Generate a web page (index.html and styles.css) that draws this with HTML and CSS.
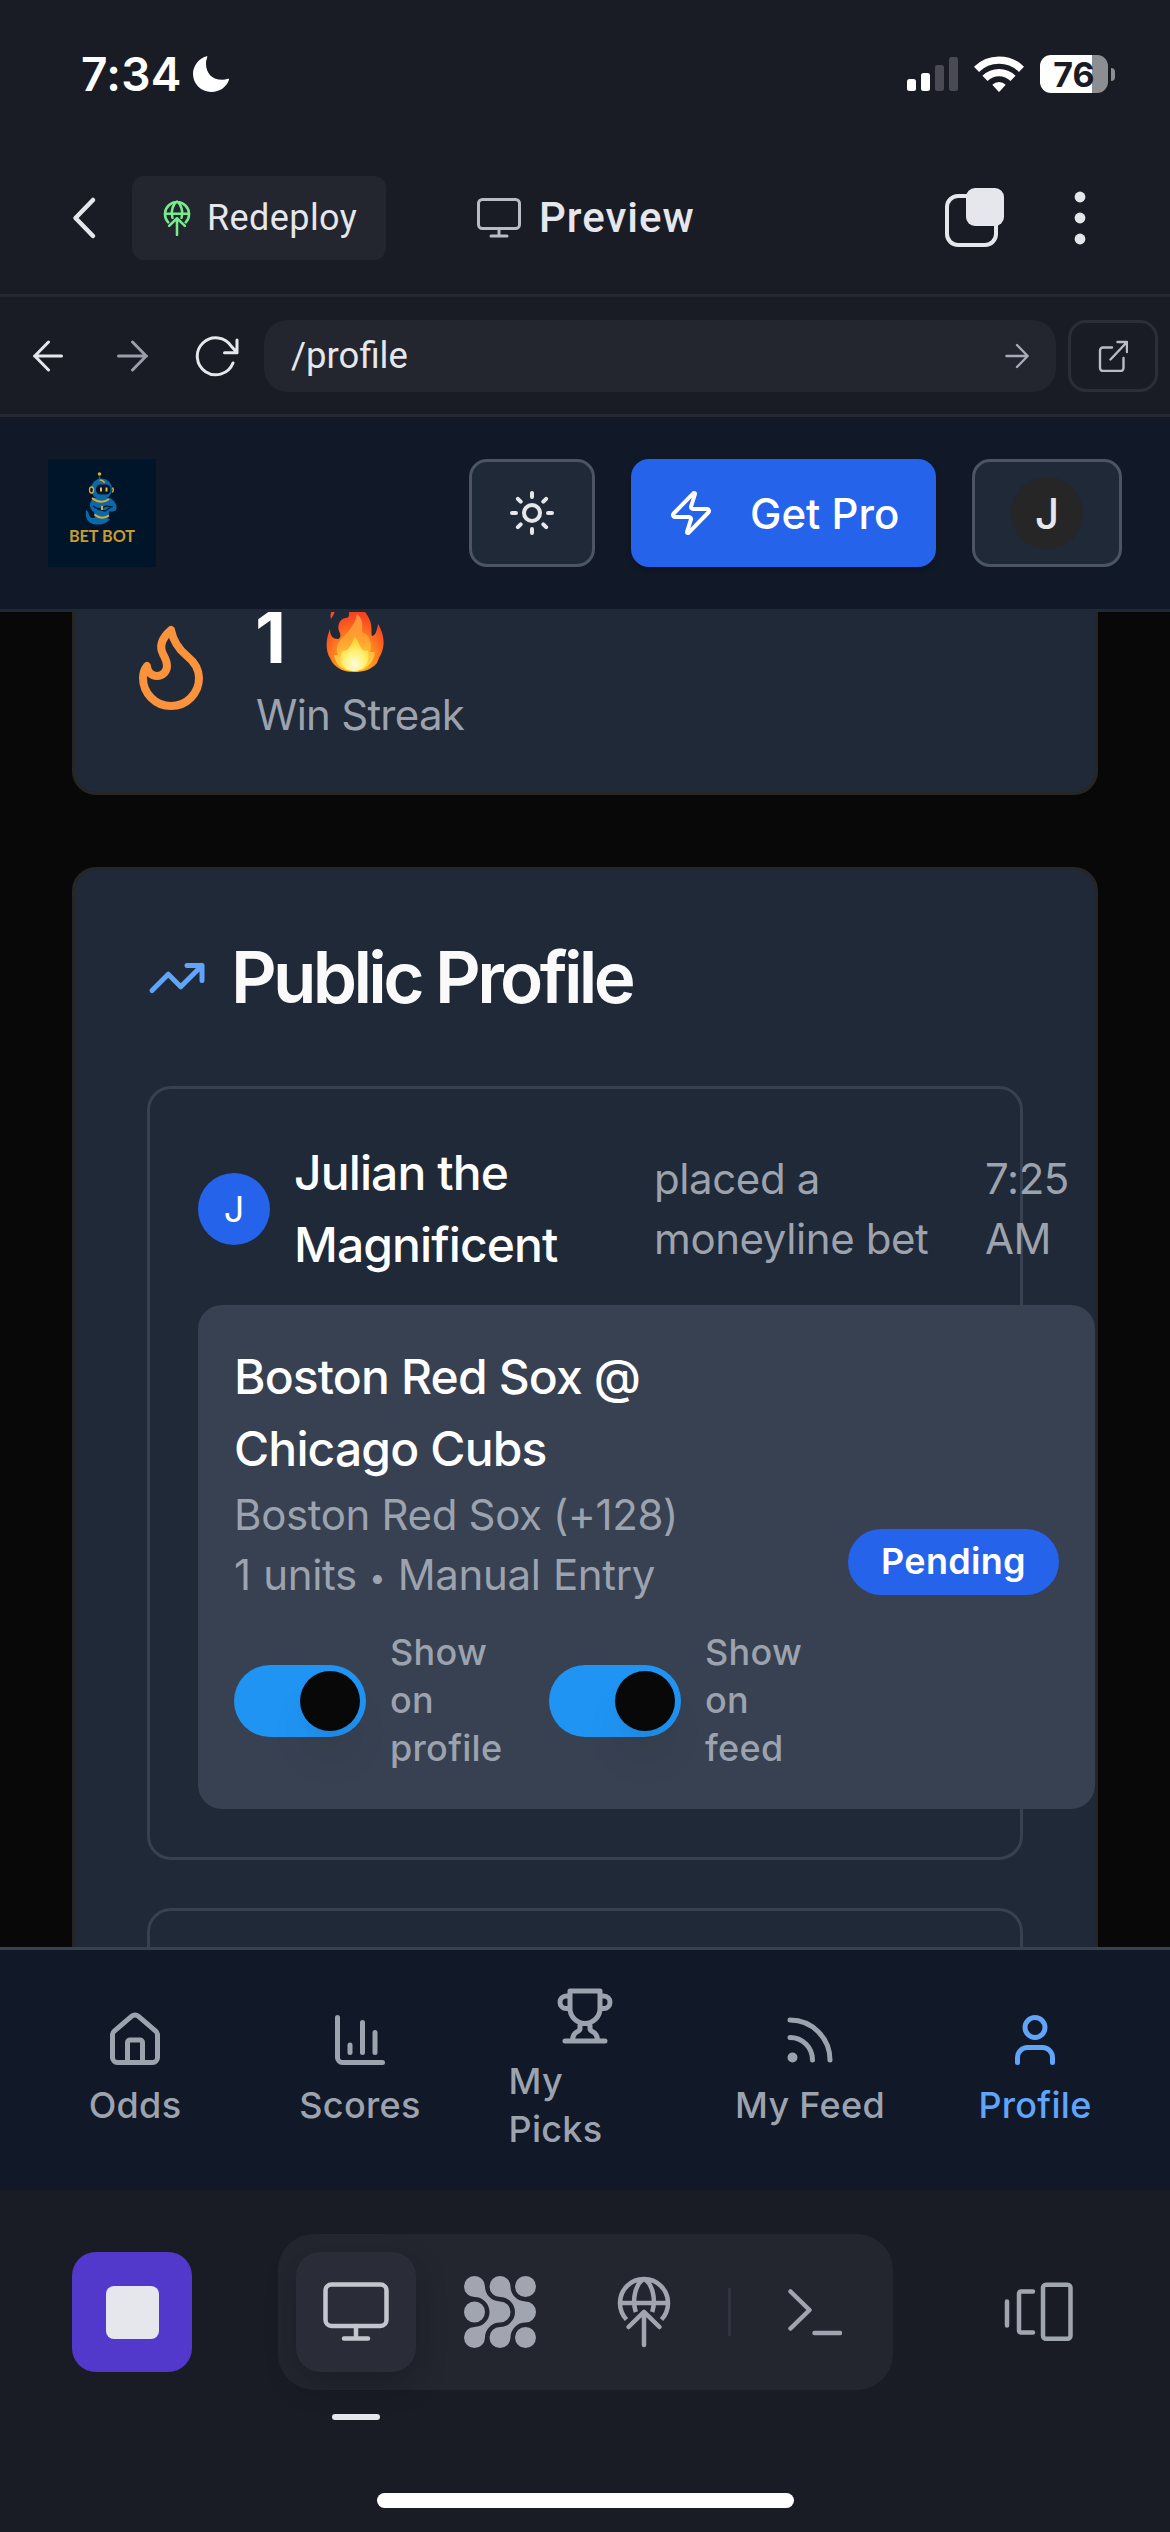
FILE: index.html
```html
<!DOCTYPE html>
<html lang="en">
<head>
<meta charset="utf-8">
<title>Bet Bot – Profile preview</title>
<link rel="stylesheet" href="styles.css">
</head>
<body>
<div class="screen">

  <header class="status">
    <div class="status-left">
      <span class="clock">7:34</span>
      <svg class="moon" width="36" height="36" viewBox="0 0 36 36"><path d="M13.5.2C6 2.200 0 9.500 0 17.800 0 28 8.200 36 18.300 36c8.300 0 15.200-4.800 17.700-12.200.3-.9-.2-1.400-1.100-1-1.800.7-3.700 1-5.800 1C19.300 23.800 13 17.300 13 7.700c0-2.400.4-4.400 1.200-6.300C14.600.5 14.400 0 13.500.2z" fill="#fff"/></svg>
    </div>
    <div class="status-right">
      <svg width="51" height="36" viewBox="0 0 51 36"><g fill="#fff"><rect y="23" width="9" height="12" rx="2.500"/><rect x="14" y="17" width="9" height="18" rx="2.500"/></g><g fill="#494a53"><rect x="28" y="9" width="9" height="26" rx="2.500"/><rect x="42" y="1" width="9" height="34" rx="2.500"/></g></svg>
      <svg class="wifi" width="50" height="36" viewBox="0 0 50 36"><g fill="none" stroke="#fff"><path d="M2.500 13.300a32 32 0 0 1 45 0" stroke-width="7.300"/><path d="M11 22.300a20 20 0 0 1 28 0" stroke-width="7.300"/></g><path d="M18.300 28.800a9.500 9.500 0 0 1 13.400 0L25.600 35.500q-.6.600-1.200 0z" fill="#fff"/></svg>
      <div class="battery"><span>76</span></div>
      <i class="battery-nub"></i>
    </div>
  </header>

  <div class="topbar">
    <svg class="back" width="30" height="48" viewBox="0 0 30 48"><path d="M24 6 6.500 24 24 42" fill="none" stroke="#e6e7ec" stroke-width="4.500" stroke-linecap="round" stroke-linejoin="round"/></svg>
    <div class="redeploy">
      <svg width="28" height="36" viewBox="617 2276 54 71" fill="none" stroke="#78ec8c" stroke-width="5" stroke-linecap="round"><path d="M626.700 2320a23.700 23.700 0 1 1 34.600 0M620 2303h48M635 2311c-3-12 0-26 9-32 9 6 12 20 9 32M644 2345v-32M628.500 2327l15.500-15 15.500 15" stroke-linejoin="round"/></svg>
      <span>Redeploy</span>
    </div>
    <div class="preview">
      <svg width="44" height="42" viewBox="0 0 44 42" fill="none" stroke="#b9bcc5" stroke-width="3" stroke-linecap="round"><rect x="1.500" y="2.500" width="41" height="29" rx="4"/><path d="M22 32v7M14 39h16"/></svg>
      <span>Preview</span>
    </div>
    <svg class="tabs" width="60" height="60" viewBox="0 0 60 60"><rect x="4" y="8" width="49" height="49" rx="11" fill="none" stroke="#e6e7ec" stroke-width="4"/><rect x="23" y="0" width="38" height="38" rx="9" fill="#e6e7ec"/></svg>
    <svg class="kebab" width="12" height="54" viewBox="0 0 12 54" fill="#e6e7ec"><circle cx="6" cy="6" r="5.400"/><circle cx="6" cy="27" r="5.400"/><circle cx="6" cy="48" r="5.400"/></svg>
  </div>

  <div class="urlbar">
    <svg width="30" height="36" viewBox="0 0 30 36" fill="none" stroke="#e6e7ec" stroke-width="3" stroke-linecap="round" stroke-linejoin="round"><path d="M28.500 18H1.500M15.500 4 1.800 18l13.700 14"/></svg>
    <svg width="31" height="36" viewBox="0 0 31 36" fill="none" stroke="#9a9ea9" stroke-width="3" stroke-linecap="round" stroke-linejoin="round"><path d="M1.500 18h28M15.500 4l13.700 14-13.700 14"/></svg>
    <svg width="44" height="42" viewBox="0 0 44 42" fill="none" stroke="#e6e7ec" stroke-width="3" stroke-linecap="round" stroke-linejoin="round"><path d="M38 28a18.500 18.500 0 1 1-1.500-16.500L42 17.500M42 5v12.800H29.500"/></svg>
    <div class="url">
      <span>/profile</span>
      <svg width="24" height="26" viewBox="0 0 24 26" fill="none" stroke="#a9acb6" stroke-width="2.400" stroke-linecap="round" stroke-linejoin="round"><path d="M1.500 13h21M12 2l10.700 11L12 24"/></svg>
    </div>
    <div class="open">
      <svg width="30" height="32" viewBox="0 0 30 32" fill="none" stroke="#b9bcc5" stroke-width="2.400" stroke-linecap="round" stroke-linejoin="round"><path d="M14 7.500H5a3 3 0 0 0-3 3V28a3 3 0 0 0 3 3h17.500a3 3 0 0 0 3-3v-10M12.500 19.500 29 2M19.500 2H29v10"/></svg>
    </div>
  </div>

  <div class="apphead">
    <div class="logo">
      <svg width="34" height="54" viewBox="0 0 34 54">
        <path d="M1 38c4 2 2 7 6 8 3 .5 4-2 5-3l13 4c-3 4-8 6-14 5.500C2 52 0 45 1 38z" fill="#0b69a8"/>
        <path d="M8 26h17c5 3 8 8 6 12-2 2-6 2-7 1v6c-4 3-10 3-14 1l-1-6c-4-2-6-8-1-14z" fill="#0b69a8"/>
        <path d="M7 26q9 7 17 1M9.500 42.500q7 6 14.500 1" fill="none" stroke="#e0ac30" stroke-width="2"/>
        <path d="M8 34q6 5 13 0l7 1M12 37l8 2 6-4" fill="none" stroke="#001529" stroke-width="1.200"/>
        <path d="M17 34v4" stroke="#e0ac30" stroke-width="2"/>
        <circle cx="16.500" cy="17" r="10.500" fill="#0b69a8"/>
        <rect x="11" y="12.500" width="14.500" height="10" rx="4.500" fill="#001529"/>
        <path d="M16 15.500v4M21.500 15.500v4" stroke="#f0bd36" stroke-width="2"/>
        <ellipse cx="6.500" cy="18" rx="2" ry="3" fill="#001529" stroke="#e0ac30" stroke-width="1.300"/>
        <path d="M27.500 15.500q1.500 2 0 5M14.500 8q4 .2 5 3" fill="none" stroke="#e0ac30" stroke-width="1.400"/>
        <circle cx="14.500" cy="2" r="1.800" fill="#e0ac30"/><path d="M14.500 4.500v3" stroke="#0b69a8" stroke-width="1.400"/>
      </svg>
      <span>BET BOT</span>
    </div>
    <div class="actions">
      <div class="iconbtn">
        <svg class="lucide" width="48" height="48" viewBox="0 0 24 24"><circle cx="12" cy="12" r="4"/><path d="M12 2v2M12 20v2M4.930 4.930l1.410 1.410M17.660 17.660l1.410 1.410M2 12h2M20 12h2M6.340 17.660l-1.410 1.410M19.070 4.930l-1.410 1.410"/></svg>
      </div>
      <div class="getpro">
        <svg class="lucide" width="48" height="48" viewBox="0 0 24 24"><path d="M4 14a1 1 0 0 1-.78-1.630l9.900-10.200a.5.5 0 0 1 .86.460l-1.920 6.020A1 1 0 0 0 13 10h7a1 1 0 0 1 .78 1.630l-9.900 10.200a.5.5 0 0 1-.86-.460l1.920-6.020A1 1 0 0 0 11 14z"/></svg>
        <span>Get Pro</span>
      </div>
      <div class="userbtn"><span class="avatar dark">J</span></div>
    </div>
  </div>

  <main class="content">
    <section class="card streak">
      <svg class="lucide flame" width="96" height="96" viewBox="0 0 24 24"><path d="M8.500 14.500A2.500 2.500 0 0 0 11 12c0-1.380-.5-2-1-3-1.072-2.143-.224-4.054 2-6 .5 2.500 2 4.900 4 6.500 2 1.600 3 3.500 3 5.500a7 7 0 1 1-14 0c0-1.153.433-2.294 1-3a2.500 2.500 0 0 0 2.500 2.500z"/></svg>
      <div class="stat">
        <div class="stat-value"><span>1</span>
          <svg width="58" height="72" viewBox="0 0 58 72">
            <defs>
              <radialGradient id="f1" cx=".5" cy=".85" r=".85"><stop offset="0" stop-color="#ffd21e"/><stop offset=".4" stop-color="#ff8a1e"/><stop offset=".75" stop-color="#fb4a20"/><stop offset="1" stop-color="#f03516"/></radialGradient>
              <linearGradient id="f2" x1="0" y1="0" x2="0" y2="1"><stop offset="0" stop-color="#ff9040"/><stop offset=".45" stop-color="#ffa02e"/><stop offset="1" stop-color="#ffe04a"/></linearGradient>
              <radialGradient id="f3" cx=".5" cy=".8" r=".7"><stop offset="0" stop-color="#fffbe0"/><stop offset=".5" stop-color="#fff27a"/><stop offset="1" stop-color="#ffd52e"/></radialGradient>
            </defs>
            <path d="M28 2c8 4 15 12 17 21 1 5 0 9 1 12 3 0 5-5 6-12 4 6 7 16 5 24-1 5-3 8-4 10l-2 5C45 69 37 71 28 71S11 68 6 61l-2-4C0 51-1 40 4 28c0 7 3 10 8 10 3-1 3-4 1-8-2-6 1-12 6-13 3 0 4-1 4-4 0-4 1-8 5-11z" fill="url(#f1)"/>
            <path d="M9 6q1 5-4 12Q3 11 9 6z" fill="#f8482a"/>
            <path d="M31 13c7 6 5 12 5 18 3 2 5 2 7 6 3 5 2 10 1 14h5c-1 10-9 19-21 19S9 63 8 54h4c-3-8 0-12 4-17 6-5 13-13 15-24z" fill="url(#f2)"/>
            <path d="M29 36c5 6 4 10 8 13 2 2 3-1 5 1 3 10-4 20-14 20S11 60 16 51c2-3 4 0 6-3 3-3 4-7 7-12z" fill="url(#f3)"/>
          </svg>
        </div>
        <div class="stat-label">Win Streak</div>
      </div>
    </section>

    <section class="card profile">
      <h2><svg class="lucide" width="60" height="60" viewBox="0 0 24 24"><path d="M22 7l-8.500 8.500-5-5L2 17M16 7h6v6"/></svg><span>Public Profile</span></h2>
      <article class="post">
        <div class="post-head">
          <span class="avatar blue">J</span>
          <strong>Julian the<br>Magnificent</strong>
          <p class="what">placed a<br>moneyline bet</p>
          <p class="when">7:25<br>AM</p>
        </div>
        <div class="bet">
          <div class="bet-main">
            <h3>Boston Red Sox @<br>Chicago Cubs</h3>
            <p class="odds">Boston Red Sox (+128)</p>
            <p class="units">1 units <span class="dot">•</span> Manual Entry</p>
            <div class="switches">
              <div class="switch"><i></i></div><label>Show<br>on<br>profile</label>
              <div class="switch"><i></i></div><label>Show<br>on<br>feed</label>
            </div>
          </div>
          <span class="badge">Pending</span>
        </div>
      </article>
      <article class="post next"></article>
    </section>
  </main>

  <nav class="tabbar">
    <div class="tab"><svg class="lucide" width="60" height="60" viewBox="0 0 24 24"><path d="M15 21v-8a1 1 0 0 0-1-1h-4a1 1 0 0 0-1 1v8"/><path d="M3 10a2 2 0 0 1 .709-1.528l7-5.999a2 2 0 0 1 2.582 0l7 5.999A2 2 0 0 1 21 10v9a2 2 0 0 1-2 2H5a2 2 0 0 1-2-2z"/></svg><span>Odds</span></div>
    <div class="tab"><svg class="lucide" width="60" height="60" viewBox="0 0 24 24"><path d="M3 3v16a2 2 0 0 0 2 2h16M18 17V9M13 17V5M8 17v-3"/></svg><span>Scores</span></div>
    <div class="tab"><svg class="lucide" width="60" height="60" viewBox="0 0 24 24"><path d="M6 9H4.500a2.500 2.500 0 0 1 0-5H6M18 9h1.500a2.500 2.500 0 0 0 0-5H18M4 22h16M10 14.660V17c0 .550-.470.980-.970 1.210C7.850 18.750 7 20.240 7 22M14 14.660V17c0 .550.470.980.970 1.210C16.150 18.750 17 20.240 17 22M18 2H6v7a6 6 0 0 0 12 0V2Z"/></svg><span class="wrap">My Picks</span></div>
    <div class="tab"><svg class="lucide" width="60" height="60" viewBox="0 0 24 24"><path d="M4 11a9 9 0 0 1 9 9M4 4a16 16 0 0 1 16 16"/><circle cx="5" cy="19" r="1"/></svg><span>My Feed</span></div>
    <div class="tab on"><svg class="lucide" width="60" height="60" viewBox="0 0 24 24"><path d="M19 21v-2a4 4 0 0 0-4-4H9a4 4 0 0 0-4 4v2"/><circle cx="12" cy="7" r="4"/></svg><span>Profile</span></div>
  </nav>

  <footer class="dock">
    <div class="stop"><i></i></div>
    <div class="tools">
      <div class="tool active"><svg width="66" height="60" viewBox="0 0 66 60" fill="none" stroke="#c3c6cd" stroke-width="4.500" stroke-linecap="round"><rect x="2.500" y="2.500" width="61" height="41.500" rx="6"/><path d="M33 44v12M21 56.500h24"/></svg><b></b></div>
      <div class="tool"><svg width="72" height="72" viewBox="0 0 72 72" fill="#a0a5b0"><defs><path id="blob" d="M10.500 0A10.500 10.500 0 0 1 21 10.500 15 15 0 0 0 36 25.500a10.500 10.500 0 0 1 0 21A15 15 0 0 0 21 61.500 10.500 10.500 0 1 1 10.500 51a15 15 0 0 0 0-30A10.500 10.500 0 0 1 10.500 0z"/></defs><use href="#blob"/><use href="#blob" x="25.500"/><circle cx="10.500" cy="36" r="10.500"/><circle cx="61.500" cy="10.500" r="10.500"/><circle cx="61.500" cy="61.500" r="10.500"/></svg></div>
      <div class="tool"><svg width="54" height="72" viewBox="0 0 54 72" fill="none" stroke="#a0a5b0" stroke-width="4.500" stroke-linecap="round" stroke-linejoin="round"><path stroke-linecap="butt" d="M9.500 43.500a24 24 0 1 1 35 0M3 27h48M18.800 36C14.500 23 19 7 27 3c8 4 12.500 20 8.200 33"/><path d="M27 69V36M11.500 51 27 35.800 42.500 51"/></svg></div>
      <i class="sep"></i>
      <div class="tool"><svg width="54" height="48" viewBox="0 0 54 48" fill="none" stroke="#a0a5b0" stroke-width="4.500" stroke-linecap="round" stroke-linejoin="round"><path d="M2.500 3.500 21.500 22 2.500 40.500M26.500 45H52"/></svg></div>
    </div>
    <svg class="panes" width="70" height="60" viewBox="0 0 70 60" fill="none" stroke="#a0a5b0" stroke-width="4.500" stroke-linecap="round" stroke-linejoin="round"><rect x="39" y="2.800" width="27.500" height="54" rx="3"/><path d="M29 9.500H17a2 2 0 0 0-2 2v37a2 2 0 0 0 2 2h12M3 19.500v24"/></svg>
  </footer>
  <div class="home"></div>
</div>
</body>
</html>
```
FILE: styles.css
```css
* { box-sizing: border-box; margin: 0; padding: 0; }

body {
  background: #191c25;
  font-family: Inter, "Liberation Sans", sans-serif;
  color: #fff;
}

svg { display: block; flex: none; }

.lucide {
  fill: none;
  stroke: currentColor;
  stroke-width: 2;
  stroke-linecap: round;
  stroke-linejoin: round;
}

.screen {
  width: 1170px;
  height: 2532px;
  display: flex;
  flex-direction: column;
  overflow: hidden;
}

/* Status bar */
.status {
  height: 148px;
  display: flex;
  justify-content: space-between;
  align-items: center;
  padding: 0 55px 0 81px;
}
.status-left, .status-right { display: flex; align-items: center; }
.clock { font-size: 46px; font-weight: 600; letter-spacing: .3px; }
.moon { margin-left: 11px; }
.wifi { margin: 0 16px 0 16px; }
.battery {
  width: 68px;
  height: 38px;
  border-radius: 11px;
  background: linear-gradient(90deg, #fff 52px, #8d8e92 52px);
  color: #191c25;
  font-size: 34px;
  font-weight: 700;
  line-height: 39px;
  text-align: center;
}
.battery-nub { width: 4px; height: 13px; margin-left: 3px; border-radius: 0 4px 4px 0; background: #8d8e92; }

/* Editor top bar */
.topbar {
  height: 149px;
  display: flex;
  align-items: center;
  padding: 0 84px 6px 69px;
  border-bottom: 3px solid #252733;
}
.redeploy {
  width: 254px;
  height: 84px;
  margin-left: 33px;
  border-radius: 12px;
  background: #23262f;
  display: flex;
  align-items: center;
  padding-left: 31px;
  gap: 16px;
  color: #e6e7ec;
  font: 400 36px/1 Roboto, "Liberation Sans", sans-serif;
  letter-spacing: .4px;
}
.preview {
  margin-left: 91px;
  display: flex;
  align-items: center;
  gap: 18px;
  color: #e6e7ec;
  font: 500 42px/1 Roboto, "Liberation Sans", sans-serif;
  letter-spacing: 1px;
}
.tabs { margin-left: auto; overflow: visible; }
.kebab { margin-left: 71px; }

/* Address bar */
.urlbar {
  height: 120px;
  display: flex;
  align-items: center;
  padding: 0 12px 0 33px;
  border-bottom: 3px solid #252733;
}
.urlbar > svg:nth-child(2) { margin-left: 54px; }
.urlbar > svg:nth-child(3) { margin-left: 47px; }
.url {
  flex: 1;
  height: 72px;
  margin-left: 25px;
  border-radius: 24px;
  background: #23262f;
  display: flex;
  align-items: center;
  justify-content: space-between;
  padding: 0 27px;
  color: #e6e7ec;
  font: 400 36.500px/1 Roboto, "Liberation Sans", sans-serif;
}
.url span { padding-top: 2px; }
.open {
  width: 90px;
  height: 72px;
  margin-left: 12px;
  border: 3px solid #2b2d38;
  border-radius: 18px;
  display: flex;
  align-items: center;
  justify-content: center;
}

/* App header */
.apphead {
  height: 195px;
  background: #111827;
  border-bottom: 3px solid #1f2937;
  display: flex;
  justify-content: space-between;
  align-items: center;
  padding: 0 48px;
}
.logo {
  width: 108px;
  height: 108px;
  background: #001529;
  display: flex;
  flex-direction: column;
  align-items: center;
  padding-top: 13px;
}
.logo span {
  color: #c99c32;
  font: 700 16.200px/20px Lato, sans-serif;
}
.actions { display: flex; gap: 36px; }
.iconbtn, .userbtn {
  height: 108px;
  border: 3px solid #4b5563;
  border-radius: 18px;
  background: #1f2937;
  color: #e5e7eb;
  display: flex;
  align-items: center;
  justify-content: center;
}
.iconbtn { width: 126px; }
.userbtn { width: 150px; }
.getpro {
  width: 305px;
  height: 108px;
  border-radius: 18px;
  background: #2563eb;
  display: flex;
  align-items: center;
  padding-left: 36px;
  gap: 35px;
  font-size: 42px;
  font-weight: 500;
  box-shadow: 0 3px 6px rgba(0, 0, 0, .2);
}
.avatar {
  width: 72px;
  height: 72px;
  flex: none;
  border-radius: 50%;
  display: flex;
  align-items: center;
  justify-content: center;
}
.avatar.dark { background: #262626; font-size: 42px; font-weight: 500; }
.avatar.blue { background: #2563eb; font-size: 36px; }

/* Page content */
.content {
  height: 1335px;
  background: #080809;
  overflow: hidden;
  padding: 0 72px;
}
.card {
  background: #1f2937;
  border: 3px solid #262626;
  border-radius: 24px;
}
.streak {
  height: 255px;
  margin-top: -72px;
  display: flex;
  align-items: center;
  gap: 36px;
  padding: 0 0 4px 48px;
}
.flame { color: #fb923c; }
.stat { padding-top: 2px; }
.stat-value {
  height: 96px;
  display: flex;
  align-items: center;
  font-size: 72px;
  font-weight: 700;
  line-height: 94px;
}
.stat-value span { padding-bottom: 2px; }
.stat-value svg {
  align-self: flex-start;
  margin-top: 11px;
  margin-left: 40px;
}
.stat-label {
  padding-left: 1px;
  color: #9ca3af;
  font-size: 42px;
  line-height: 58px;
  letter-spacing: -.75px;
}

.profile {
  height: 1400px;
  margin-top: 72px;
  padding: 72px 72px 0;
}
.profile h2 {
  height: 72px;
  display: flex;
  align-items: center;
  gap: 24px;
  color: #fafafa;
  font-size: 71px;
  font-weight: 600;
  line-height: 70px;
  letter-spacing: -3.700px;
}
.profile h2 span { padding-bottom: 2px; }
.profile h2 svg { color: #60a5fa; }
.post {
  height: 774px;
  margin-top: 72px;
  border: 3px solid #374151;
  border-radius: 24px;
  padding: 48px;
}
.post.next { margin-top: 48px; }
.post-head {
  width: 897px;
  height: 144px;
  display: flex;
  align-items: center;
}
.post-head strong {
  width: 336px;
  margin-left: 24px;
  font-size: 48px;
  font-weight: 500;
  line-height: 72px;
  letter-spacing: -.900px;
}
.post-head p {
  color: #9ca3af;
  font-size: 42px;
  line-height: 60px;
  letter-spacing: -.4px;
}
.what { width: 331px; margin-left: 24px; }
.bet {
  width: 897px;
  height: 504px;
  margin-top: 24px;
  padding: 36px;
  border-radius: 24px;
  background: #374151;
  display: flex;
  align-items: center;
  justify-content: space-between;
}
.bet-main { width: 600px; flex: none; }
.bet h3 {
  font-size: 48px;
  font-weight: 500;
  line-height: 72px;
  letter-spacing: -.850px;
}
.bet p { height: 60px; color: #9ca3af; font-size: 42px; line-height: 60px; }
.odds { letter-spacing: -.350px; }
.units { letter-spacing: -.350px; word-spacing: 1px; }
.dot { font-size: 29px; line-height: 1; vertical-align: 2px; }
.switches {
  height: 144px;
  margin-top: 24px;
  display: flex;
  align-items: center;
}
.switches label {
  width: 183px;
  padding-left: 24px;
  padding-bottom: 2px;
  color: #9ca3af;
  font-size: 36px;
  font-weight: 500;
  line-height: 48px;
  letter-spacing: .3px;
}
.switches label:last-child { width: 110px; }
.switch {
  width: 132px;
  height: 72px;
  flex: none;
  border-radius: 36px;
  background: #2094f3;
  padding: 6px;
}
.switch i {
  display: block;
  width: 60px;
  height: 60px;
  margin-left: auto;
  border-radius: 50%;
  background: #080809;
  box-shadow: 0 30px 45px -9px rgba(0, 0, 0, .1), 0 12px 18px -12px rgba(0, 0, 0, .1);
}
.badge {
  width: 211px;
  height: 66px;
  flex: none;
  margin-top: 10px;
  border-radius: 33px;
  background: #2563eb;
  font-size: 36px;
  font-weight: 600;
  line-height: 65px;
  letter-spacing: .3px;
  text-align: center;
}

/* App tab bar */
.tabbar {
  height: 243px;
  border-top: 3px solid #374151;
  background: #111827;
  display: grid;
  grid-template-columns: repeat(5, 225px);
  justify-content: center;
  align-items: center;
  color: #9ca3af;
}
.tab {
  display: flex;
  flex-direction: column;
  align-items: center;
  gap: 11px;
  padding: 0 36px 1px;
  font-size: 36px;
  font-weight: 500;
  line-height: 48px;
  letter-spacing: .3px;
}
.tab span { white-space: nowrap; }
.tab .wrap { white-space: normal; width: 153px; padding-right: 40px; }
.tab.on { color: #60a5fa; }

/* Editor dock */
.dock {
  height: 244px;
  display: flex;
  align-items: center;
  padding: 0 96px 0 72px;
}
.stop {
  width: 120px;
  height: 120px;
  border-radius: 24px;
  background: #5338cc;
  display: flex;
  align-items: center;
  justify-content: center;
}
.stop i { width: 53px; height: 53px; border-radius: 8px; background: #e6e7ec; }
.tools {
  width: 615px;
  height: 156px;
  margin-left: 86px;
  padding: 0 18px;
  border-radius: 36px;
  background: #23262f;
  display: flex;
  align-items: center;
  gap: 24px;
}
.tool {
  width: 120px;
  height: 120px;
  flex: none;
  display: flex;
  align-items: center;
  justify-content: center;
}
.active {
  position: relative;
  border-radius: 24px;
  background: #2a2c37;
  box-shadow: 0 12px 30px rgba(10, 12, 20, .3);
}
.active b {
  position: absolute;
  left: 36px;
  top: 162px;
  width: 48px;
  height: 6px;
  border-radius: 3px;
  background: #e6e7ec;
}
.sep { width: 3px; height: 48px; background: #30333f; }
.panes { margin-left: auto; }

.home {
  width: 417px;
  height: 15px;
  margin: 59px auto 0;
  border-radius: 8px;
  background: #fff;
}
```
